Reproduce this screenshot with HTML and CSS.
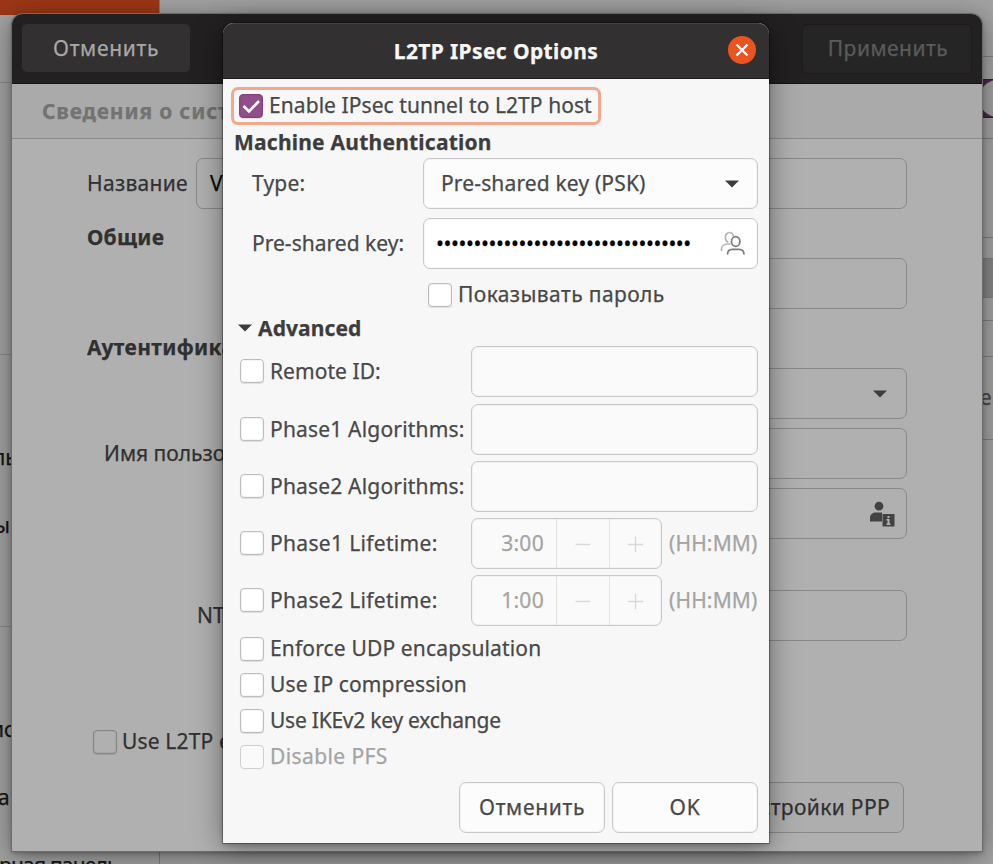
FILE: index.html
```html
<!DOCTYPE html>
<html lang="ru">
<head>
<meta charset="utf-8">
<title>L2TP IPsec Options</title>
<link rel="stylesheet" href="styles.css">
</head>
<body>
<div class="desktop">
  <div class="sidebar">
    <div class="sidebar-head"></div>
    <div class="side-row line"></div>
    <div class="side-row"></div>
    <div class="side-row"></div>
    <div class="side-row"></div>
    <div class="side-row line"></div>
    <div class="side-row"></div>
    <div class="side-row s1">ль</div>
    <div class="side-row s2">ы</div>
    <div class="side-row line"></div>
    <div class="side-row"></div>
    <div class="side-row s3">ис</div>
    <div class="side-row s4">а</div>
    <div class="side-row s5">рная панель</div>
  </div>
  <div class="content">
    <div class="cell c1"></div>
    <div class="cell c2"><div class="switch"><div class="knob"></div></div></div>
    <div class="cell c3"></div>
    <div class="cell c4"></div>
    <div class="cell c5"></div>
    <div class="cell c6"></div>
    <div class="cell c7"></div>
    <div class="cell c8">ен</div>
  </div>
</div>

<section class="window parent">
  <header class="parent-head">
    <button class="head-btn"><span class="t-cancel">Отменить</span></button>
    <button class="head-btn off"><span class="t-apply">Применить</span></button>
  </header>
  <nav class="tabs"><b class="t-tab">Сведения о системе</b></nav>
  <div class="parent-body">
    <div class="prow name"><span class="t-name">Название</span><div class="pfield first"><span>V</span></div></div>
    <div class="prow head1"><b class="t-common">Общие</b></div>
    <div class="prow gate"><div class="pfield"></div></div>
    <div class="prow head2"><b class="t-auth">Аутентификация</b></div>
    <div class="prow type"><div class="pfield"><svg class="arrow" viewBox="0 0 16 8"><path d="M1 0.5h14L8 7.5z"/></svg></div></div>
    <div class="prow user"><span class="t-user">Имя пользователя</span><div class="pfield"></div></div>
    <div class="prow pass"><div class="pfield">
      <svg class="user-info" viewBox="0 0 26 26"><circle cx="10" cy="5.2" r="4.4"/><path d="M1 20.5v-3.5c0-4 3-5.5 6-5.5h6v9z"/><path fill-rule="evenodd" d="M13.5 13h12v12.500h-12zM18.500 15v2h2v-2zM17.500 18v1.500h1v3h-1V24h4v-1.500h-1V18z"/></svg>
    </div></div>
    <div class="prow domain"><span class="t-nt">NT</span><div class="pfield"></div></div>
    <div class="prow use"><i class="check dim"></i><span class="t-use">Use L2TP e</span></div>
    <div class="prow ppp"><button class="pbtn"><span class="t-set">Настройки PPP</span></button></div>
  </div>
</section>

<section class="window dialog">
  <header class="dialog-head">
    <b class="t-title">L2TP IPsec Options</b>
    <button class="close"><svg viewBox="0 0 28 28"><path d="M8.500 8.500l11 11M19.500 8.500l-11 11"/></svg></button>
  </header>
  <div class="dialog-body">
    <label class="focus"><i class="check on"><svg viewBox="0 0 24 24"><path d="M4.500 12l5.500 5.500L20 7"/></svg></i><span class="t-enable">Enable IPsec tunnel to L2TP host</span></label>
    <h2 class="machine"><span class="t-machine">Machine Authentication</span></h2>
    <div class="pair"><span class="t-type">Type:</span><div class="combo"><span class="t-psk">Pre-shared key (PSK)</span><svg class="arrow" viewBox="0 0 16 8"><path d="M1 0.500h14L8 7.500z"/></svg></div></div>
    <div class="pair second"><span class="t-key">Pre-shared key:</span><div class="combo entry"><span class="dots">••••••••••••••••••••••••••••••••••</span>
      <svg class="users" viewBox="0 0 26 26"><g class="back"><path d="M13.500 5.500C13 3 11.500 1.500 9.500 1.500C7 1.500 5.300 3.500 5.300 6.300c0 2.500 1.200 4.300 3 5"/><path d="M1.500 20v-1.500c0-3.300 2.500-5.500 6-5.500h3"/></g><ellipse cx="15.700" cy="10.500" rx="4.200" ry="4.900"/><path d="M7.500 23.500c0-3.500 2-5.200 5-5.200h6.500c3 0 5 1.700 5 5.200"/></svg>
    </div></div>
    <label class="show"><i class="check"></i><span class="t-show">Показывать пароль</span></label>
    <h2 class="advanced"><svg class="arrow" viewBox="0 0 16 8"><path d="M1 0.500h14L8 7.500z"/></svg><span class="t-adv">Advanced</span></h2>
    <div class="opt"><i class="check"></i><span class="t-remote">Remote ID:</span><div class="field"></div></div>
    <div class="opt a1"><i class="check"></i><span class="t-alg">Phase1 Algorithms:</span><div class="field"></div></div>
    <div class="opt"><i class="check"></i><span class="t-alg">Phase2 Algorithms:</span><div class="field"></div></div>
    <div class="opt"><i class="check"></i><span class="t-life">Phase1 Lifetime:</span><div class="spin"><span class="num">3:00</span><svg viewBox="0 0 53 49"><path d="M19 25.500h15"/></svg><svg viewBox="0 0 53 49"><path d="M18.500 25.500h16M26.500 17.500v16"/></svg></div><span class="unit">(HH:MM)</span></div>
    <div class="opt"><i class="check"></i><span class="t-life">Phase2 Lifetime:</span><div class="spin"><span class="num">1:00</span><svg viewBox="0 0 53 49"><path d="M19 25.500h15"/></svg><svg viewBox="0 0 53 49"><path d="M18.500 25.500h16M26.500 17.500v16"/></svg></div><span class="unit">(HH:MM)</span></div>
    <div class="flags">
      <label><i class="check"></i><span class="t-udp">Enforce UDP encapsulation</span></label>
      <label><i class="check"></i><span class="t-ip">Use IP compression</span></label>
      <label><i class="check"></i><span class="t-ike">Use IKEv2 key exchange</span></label>
      <label class="off"><i class="check off"></i><span class="t-pfs">Disable PFS</span></label>
    </div>
    <footer><button><span class="t-cancel">Отменить</span></button><button><span class="t-ok">OK</span></button></footer>
  </div>
</section>
</body>
</html>
```
FILE: styles.css
```css
* { box-sizing: border-box; }
html, body { margin: 0; width: 993px; height: 864px; overflow: hidden; }
body { position: relative; font: 21px/30px "Noto Sans", "Open Sans", sans-serif; -webkit-text-stroke: .25px; color: #484848; background: #a2a2a2; }
button { font: inherit; color: inherit; padding: 0; margin: 0; border: 0; white-space: nowrap; }
span, b, label, nav { white-space: nowrap; }
i.check { display: block; flex: none; width: 24px; height: 24px; margin-bottom: 1px; border: 1px solid #bdbdbd; border-radius: 4px; background: #fff; box-shadow: 0 1px 1px rgba(0,0,0,.1), inset 0 0 0 1px rgba(0,0,0,.04); }
.arrow { flex: none; width: 16px; height: 8px; fill: #3c3c3c; }

/* letter spacing per label */
.t-cancel { letter-spacing: .68px; }
.t-apply { letter-spacing: .5px; }
.t-tab { letter-spacing: .82px; }
.t-name { letter-spacing: .3px; }
.t-common { letter-spacing: .3px; }
.t-auth { letter-spacing: .35px; }
.t-use { letter-spacing: .15px; }
.t-set { letter-spacing: .35px; }
.t-title { letter-spacing: .38px; }
.t-enable { letter-spacing: .07px; }
.t-machine { letter-spacing: .22px; }
.t-type { letter-spacing: .2px; }
.t-psk { letter-spacing: .15px; }
.t-key { letter-spacing: .02px; }
.t-show { letter-spacing: .4px; }
.t-adv { letter-spacing: .1px; }
.t-remote { letter-spacing: .05px; }
.t-alg { letter-spacing: .18px; }
.t-life { letter-spacing: .33px; }
.t-udp { letter-spacing: .15px; }
.t-ip { letter-spacing: .12px; }
.t-ike { letter-spacing: -.24px; }
.t-pfs { letter-spacing: .4px; }
.t-ok { letter-spacing: .8px; }

.desktop { display: flex; justify-content: space-between; height: 864px; overflow: hidden; }
.sidebar { width: 160px; border-right: 1px solid #7c7c7c; color: #151515; }
.sidebar-head { width: 159px; height: 15px; background: #9c3716; }
.side-row { height: 68px; line-height: 69px; white-space: nowrap; overflow: hidden; }
.side-row.line { border-bottom: 1px solid #878787; }
.s1 { text-indent: -7px; }
.s2 { text-indent: -6px; }
.s3 { text-indent: -9px; }
.s4 { text-indent: -2px; }
.s5 { text-indent: -1px; letter-spacing: -.8px; }
.content { width: 60px; display: flex; flex-direction: column; color: #484848; }
.cell { border-bottom: 1px solid #7f7f7f; flex: none; }
.c1 { height: 57px; }
.c2 { height: 82px; padding: 22px 0 0 45px; }
.c3 { height: 99px; }
.c4 { height: 21px; }
.c5 { height: 39px; background: #868686; }
.c6 { height: 23px; }
.c7 { height: 36px; }
.c8 { height: 83px; padding: 25px 0 0 47px; }
.switch { height: 39px; width: 60px; background: #4b2a48; border: 1px solid #341d32; }
.knob { width: 37px; height: 37px; border-radius: 50%; background: #a0a0a0; }

.window { position: absolute; }
.parent { left: 12px; top: 14px; width: 970px; height: 837px; background: #b0b0b0; border-radius: 11px 11px 0 0; box-shadow: 0 0 0 1px #6b6b6b, 0 2px 5px rgba(0,0,0,.3), 0 5px 28px rgba(0,0,0,.42); color: #303030; }
.parent-head { height: 70px; background: #222021; border-bottom: 1px solid #141414; border-radius: 11px 11px 0 0; display: flex; justify-content: space-between; padding: 10px 10px 0; }
.head-btn { width: 168px; height: 48px; background: #323031; border-radius: 5px; color: #a9a8a7; }
.head-btn.off { width: 170px; height: 50px; background: #252525; border: 1px solid #1b1b1b; color: #5b5b5b; padding: 0 0 2px 2px; }
.tabs { height: 55px; padding-left: 30px; line-height: 54px; background: #aaa; border-bottom: 1px solid #8a8a8a; color: #737373; overflow: hidden; }
.parent-body { padding: 19px 75px 0; }
.prow { display: flex; align-items: center; height: 51px; overflow: hidden; }
.prow > span, .pfield > span { padding-bottom: 2px; }
.pfield { margin-left: auto; width: 540px; height: 51px; border: 1px solid #898989; border-radius: 7px; display: flex; align-items: center; justify-content: flex-end; padding-right: 18px; }
.pfield.first { width: 711px; justify-content: flex-start; padding-left: 13px; color: #080808; }
.prow.head1 { height: 49px; line-height: 56px; align-items: flex-start; }
.prow.head2 { height: 59px; padding-top: 17px; }
.prow.user, .prow.pass { margin-top: 9px; }
.prow.user { padding-left: 17px; }
.user-info { width: 26px; height: 26px; margin-right: -7px; fill: #424242; }
.prow.domain { margin-top: 51px; padding-left: 110px; }
.prow.use { margin-top: 76px; padding-left: 6px; height: 50px; }
.prow.use .check { margin-right: 5px; }
i.check.dim { background: #b0b0b0; border-color: #858585; }
.prow.ppp { margin-top: 15px; justify-content: flex-end; padding-right: 3px; }
.pbtn { width: 180px; height: 51px; border: 1px solid #898989; border-radius: 7px; background: #aeaeae; padding: 0 13px 2px 0; text-align: right; }

.dialog { left: 223px; top: 23px; width: 546px; height: 820px; background: #f7f7f7; border-radius: 11px 11px 0 0; box-shadow: 0 0 0 1px rgba(0,0,0,.3), 0 2px 5px rgba(0,0,0,.22), 0 4px 30px rgba(0,0,0,.42); }
.dialog-head { position: relative; display: flex; align-items: center; justify-content: center; height: 56px; background: #323031; border-top: 1px solid #454344; border-bottom: 1px solid #1d1d1d; border-radius: 11px 11px 0 0; color: #f6f6f5; }
.close { position: absolute; right: 13px; top: 12px; width: 28px; height: 28px; border-radius: 50%; background: #e95420; }
.close svg { display: block; width: 28px; height: 28px; fill: none; stroke: #fff; stroke-width: 2.4; }
.dialog-body { padding: 8px 11px 0 8px; }
.dialog-body label > span, .pair span, .opt > span { padding-bottom: 2px; }
.focus { display: flex; align-items: center; width: 370px; height: 38px; border: 3px solid #f3a78d; border-radius: 7px; padding-left: 5px; gap: 6px; }
i.check.on { background: #924d8b; border-color: #864180; }
.check svg { display: block; width: 24px; height: 24px; margin: -1px; fill: none; stroke: #fff; stroke-width: 2.6; }
h2 { margin: 0; font-size: 21px; line-height: 34px; font-weight: 700; color: #3d3d3d; display: flex; align-items: center; }
.machine { height: 33px; padding-left: 3px; }
.pair { display: flex; align-items: center; justify-content: space-between; height: 51px; padding-left: 21px; }
.second { margin-top: 9px; }
.combo { display: flex; align-items: center; justify-content: space-between; width: 335px; height: 51px; border: 1px solid #c8c8c8; border-radius: 7px; background: #fcfcfc; padding: 0 17px 0 17px; box-shadow: inset 0 0 0 1px rgba(0,0,0,.03); }
.entry { background: #fff; padding: 0 11px 0 12px; }
.dots { color: #000; letter-spacing: -.4px; }
.users { width: 26px; height: 26px; fill: none; stroke: #7c7c7c; stroke-width: 1.7; }
.users .back { stroke: #b5b5b5; }
.show { display: flex; align-items: center; gap: 6px; height: 52px; padding-left: 197px; }
.advanced { height: 25px; padding: 0 0 11px 6px; gap: 5px; }
.opt { display: flex; align-items: center; height: 51px; padding-left: 9px; margin-bottom: 6px; }
.opt .check { margin-right: 6px; }
.opt.a1 { margin-top: 7px; }
.field { margin-left: auto; width: 287px; height: 51px; border: 1px solid #c8c8c8; border-radius: 7px; background: #fafafa; box-shadow: inset 0 0 0 1px rgba(0,0,0,.03); }
.spin { margin-left: auto; display: grid; grid-template-columns: 1fr 53px 52px; width: 191px; height: 51px; border: 1px solid #c8c8c8; border-radius: 7px; background: #fafafa; box-shadow: inset 0 0 0 1px rgba(0,0,0,.03); color: #a4a4a4; }
.num { text-align: right; padding-right: 12px; line-height: 49px; letter-spacing: .3px; }
.spin svg { display: block; width: 53px; height: 49px; border-left: 1px solid #e2e2e2; fill: none; stroke: #d8d8d8; stroke-width: 1.400; }
.spin svg:last-child { width: 52px; }
.unit { width: 90px; margin-left: 6px; padding-left: 1px; color: #a4a4a4; letter-spacing: .15px; }
.flags { margin-top: -1px; }
.flags label { display: flex; align-items: center; height: 36px; padding-left: 9px; gap: 6px; }
.flags .off { color: #a4a4a4; }
i.check.off { background: #fafafa; border-color: #cfcfcf; box-shadow: none; }
footer { display: flex; justify-content: flex-end; gap: 7px; margin-top: 7px; }
footer button { width: 146px; height: 51px; padding-bottom: 2px; border: 1px solid #c8c8c8; border-radius: 7px; background: #fcfcfc; box-shadow: inset 0 0 0 1px rgba(0,0,0,.03); }
```
